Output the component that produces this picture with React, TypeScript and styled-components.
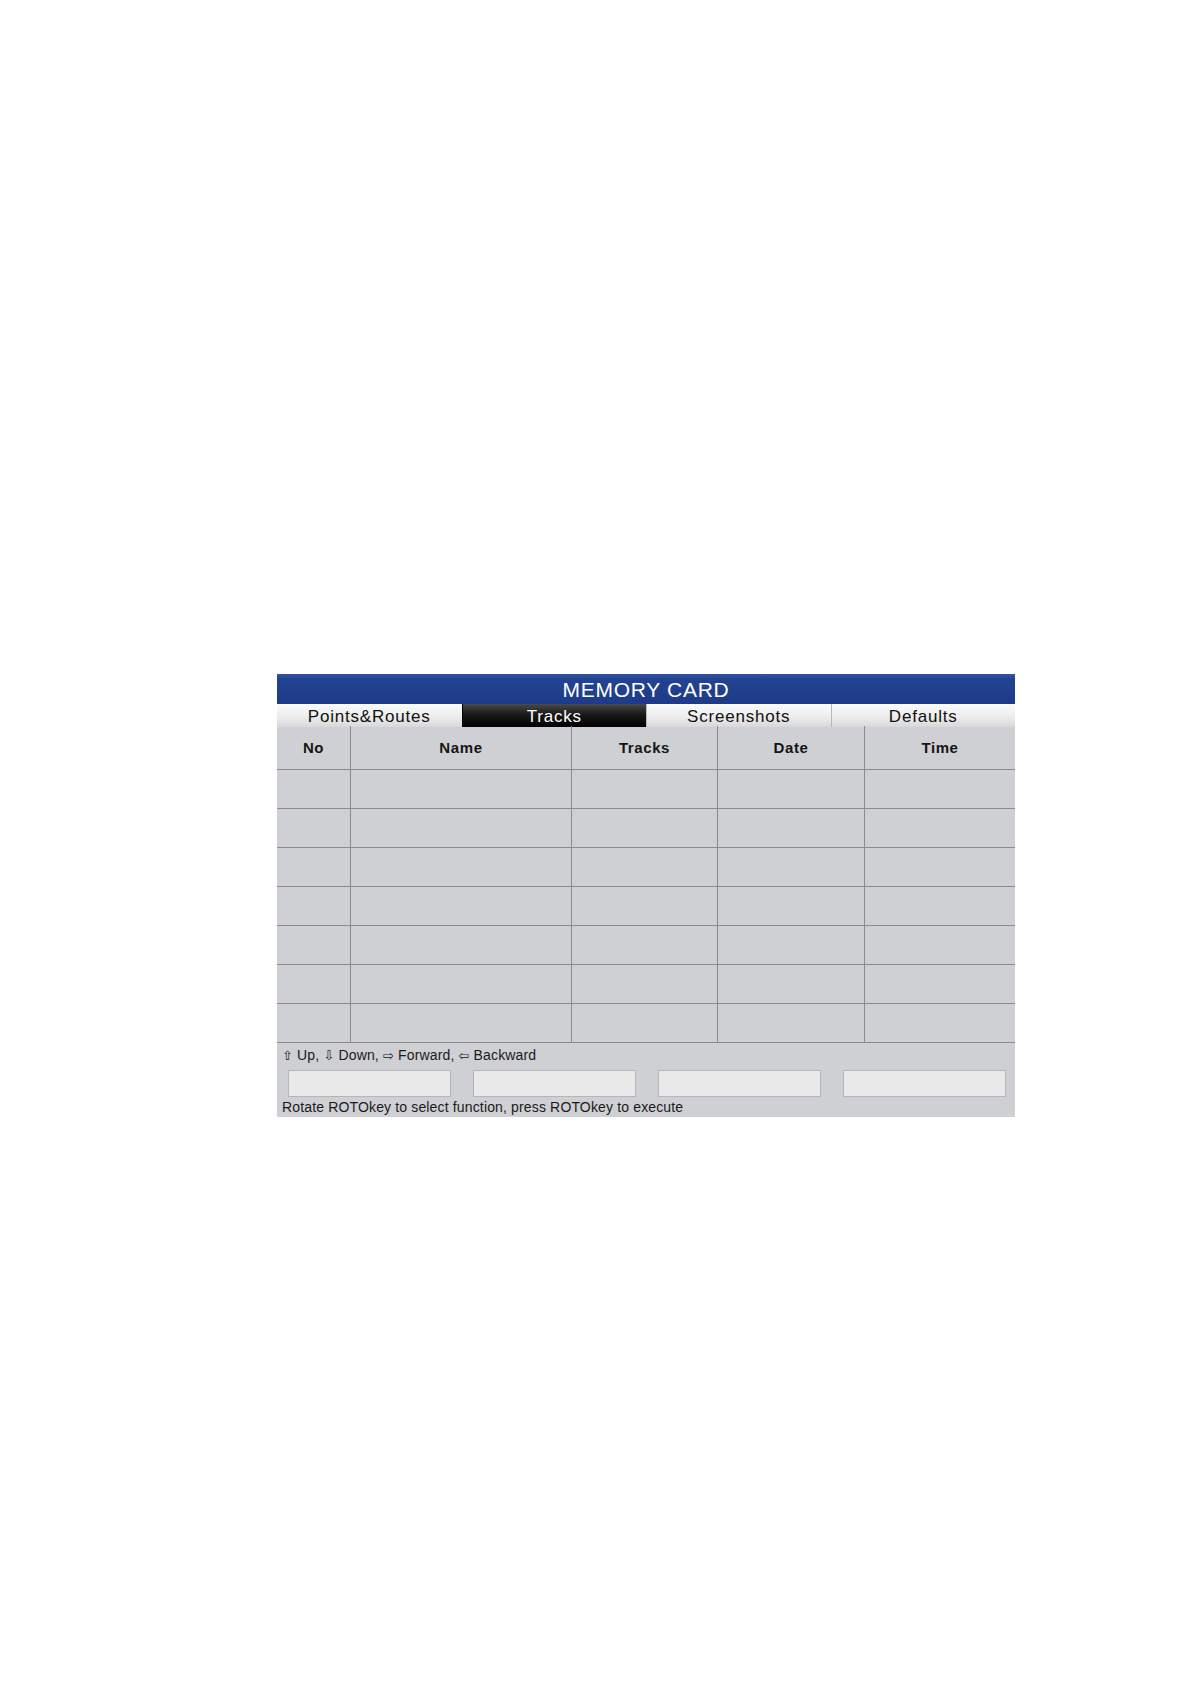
import React from "react";
import styled, { createGlobalStyle } from "styled-components";

const GlobalStyle = createGlobalStyle`
  html, body {
    margin: 0;
    padding: 0;
    background: #ffffff;
  }
  body {
    font-family: "Liberation Sans", Arial, sans-serif;
  }
`;

const Page = styled.div`
  width: 1190px;
  height: 1684px;
  padding: 674px 0 0 277px;
  box-sizing: border-box;
`;

const Panel = styled.div`
  width: 738px;
  display: flex;
  flex-direction: column;
  background: #cfd0d4;
`;

const TitleBar = styled.div`
  height: 30px;
  display: flex;
  align-items: center;
  justify-content: center;
  background: linear-gradient(#3453a4 0%, #23428f 18%, #1d3b88 100%);
  color: #ffffff;
  font-size: 21px;
  letter-spacing: 0.7px;
  padding-top: 2px;
  box-sizing: border-box;
`;

const TabRow = styled.div`
  height: 22px;
  display: grid;
  grid-template-columns: repeat(4, 1fr);
`;

const Tab = styled.div<{ active?: boolean }>`
  display: flex;
  align-items: center;
  justify-content: center;
  font-size: 17px;
  letter-spacing: 0.8px;
  padding-top: 3px;
  box-sizing: border-box;
  color: ${(p) => (p.active ? "#ffffff" : "#111111")};
  background: ${(p) =>
    p.active
      ? "linear-gradient(#4a4a4a 0%, #1a1a1a 45%, #000000 100%)"
      : "linear-gradient(#fbfbfb 0%, #ededed 55%, #d8d8d8 100%)"};
  border-left: 1px solid ${(p) => (p.active ? "#000" : "#b9b9b9")};
  &:first-child {
    border-left: none;
  }
`;

const COLS = "74px 221px 146px 147px 150px";

const Row = styled.div<{ head?: boolean }>`
  display: grid;
  grid-template-columns: ${COLS};
  height: ${(p) => (p.head ? 44 : 39)}px;
  box-sizing: border-box;
  border-bottom: 1px solid #8b8b8d;
`;

const Cell = styled.div<{ head?: boolean }>`
  display: flex;
  align-items: center;
  justify-content: center;
  border-right: 1px solid #8b8b8d;
  font-size: 15px;
  font-weight: bold;
  letter-spacing: 0.6px;
  color: #151515;
  &:last-child {
    border-right: none;
  }
`;

const Footer = styled.div`
  display: flex;
  flex-direction: column;
  padding: 0 9px 0 5px;
`;

const HintText = styled.div<{ tall?: boolean }>`
  font-size: 14px;
  letter-spacing: 0.15px;
  color: #1a1a1a;
  height: ${(p) => (p.tall ? 22 : 20)}px;
  line-height: ${(p) => (p.tall ? 25 : 21)}px;
  white-space: nowrap;
`;

const ButtonRow = styled.div`
  display: grid;
  grid-template-columns: repeat(4, 163px);
  column-gap: 22px;
  padding: 5px 0 0 6px;
`;

const SoftKey = styled.div`
  height: 27px;
  box-sizing: border-box;
  background: #e9e9e9;
  border: 1px solid #b5b6b9;
`;

const Arrow = styled.span`
  font-family: "DejaVu Sans", sans-serif;
  font-size: 13px;
`;

const columns = ["No", "Name", "Tracks", "Date", "Time"];

const tabs = ["Points&Routes", "Tracks", "Screenshots", "Defaults"];

const App = () => {
  const rows = Array.from({ length: 7 });

  return (
    <>
      <GlobalStyle />
      <Page>
        <Panel>
          <TitleBar>MEMORY CARD</TitleBar>
          <TabRow>
            {tabs.map((tab) => (
              <Tab key={tab} active={tab == "Tracks"}>
                {tab}
              </Tab>
            ))}
          </TabRow>
          <Row head>
            {columns.map((col) => (
              <Cell key={col}>{col}</Cell>
            ))}
          </Row>
          {rows.map((_, i) => (
            <Row key={i}>
              {columns.map((col) => (
                <Cell key={col} />
              ))}
            </Row>
          ))}
          <Footer>
            <HintText tall>
              <Arrow>⇧</Arrow> Up, <Arrow>⇩</Arrow> Down, <Arrow>⇨</Arrow>{" "}
              Forward, <Arrow>⇦</Arrow> Backward
            </HintText>
            <ButtonRow>
              <SoftKey />
              <SoftKey />
              <SoftKey />
              <SoftKey />
            </ButtonRow>
            <HintText>
              Rotate ROTOkey to select function, press ROTOkey to execute
            </HintText>
          </Footer>
        </Panel>
      </Page>
    </>
  );
};

export default App;
